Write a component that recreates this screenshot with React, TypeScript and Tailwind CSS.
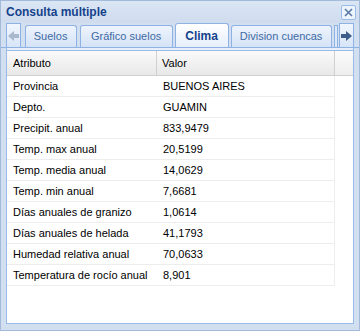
import React from 'react';

const rows: [string, string][] = [
  ['Provincia', 'BUENOS AIRES'],
  ['Depto.', 'GUAMIN'],
  ['Precipit. anual', '833,9479'],
  ['Temp. max anual', '20,5199'],
  ['Temp. media anual', '14,0629'],
  ['Temp. min anual', '7,6681'],
  ['Días anuales de granizo', '1,0614'],
  ['Días anuales de helada', '41,1793'],
  ['Humedad relativa anual', '70,0633'],
  ['Temperatura de rocío anual', '8,901'],
];

const tabs = [
  { label: 'Suelos', w: 'w-[52px]' },
  { label: 'Gráfico suelos', w: 'w-[93px]' },
  { label: 'Clima', w: 'w-[54px]', active: true },
  { label: 'Division cuencas', w: 'w-[101px]' },
];

const Arrow = ({ dir, color }: { dir: 'left' | 'right'; color: string }) => (
  <svg width="11" height="10" viewBox="0 0 11 10" className={dir === 'left' ? 'rotate-180' : ''}>
    <rect x="0" y="3" width="6" height="4" fill={color} />
    <path d="M5 0 L11 5 L5 10 Z" fill={color} />
  </svg>
);

export default function App() {
  return (
    <div
      className="w-[360px] h-[331px] flex flex-col bg-[#d2dff0] border border-[#a3bad9] text-[11px]"
      style={{ fontFamily: '"Liberation Sans", Arial, sans-serif' }}
    >
      {/* title */}
      <div className="h-[22px] flex items-center justify-between pl-[5px] pr-[3px] bg-gradient-to-b from-[#dae6f4] to-[#cfdcee]">
        <span className="font-bold text-[12px] text-[#15428b]">Consulta múltiple</span>
        <div className="w-[15px] h-[15px] border border-[#99bbe8] bg-[#eef4fc] rounded-[2px] flex items-center justify-center">
          <svg width="9" height="9" viewBox="0 0 9 9">
            <path d="M1 1 L8 8 M8 1 L1 8" stroke="#5b7aa8" strokeWidth="1.6" />
          </svg>
        </div>
      </div>

      {/* tab strip */}
      <div className="h-[25px] flex items-end pl-[5px] pr-[5px] border-b border-[#8db2e3]">
        <div className="w-[18px] h-[24px] border border-b-0 border-[#8db2e3] bg-gradient-to-b from-[#f1f6fd] to-[#d7e5f7] flex items-center justify-center">
          <Arrow dir="left" color="#a9b8cc" />
        </div>
        <div className="flex items-end ml-[3px] gap-[1px] flex-1">
          {tabs.map((t) => (
            <div
              key={t.label}
              className={`${t.w} flex items-center justify-center border border-b-0 border-[#8db2e3] rounded-t-[3px] ${
                t.active
                  ? 'h-[24px] bg-gradient-to-b from-[#ffffff] to-[#e6effb] font-bold text-[#15428b] text-[12px]'
                  : 'h-[22px] bg-gradient-to-b from-[#eef4fd] to-[#d5e3f6] text-[#416aa3] mx-[1px]'
              }`}
            >
              {t.label}
            </div>
          ))}
          <div className="w-[4px] h-[22px] border border-b-0 border-[#8db2e3] bg-[#dce8f7]" />
        </div>
        <div className="w-[19px] h-[24px] border border-b-0 border-[#8db2e3] bg-gradient-to-b from-[#f1f6fd] to-[#d7e5f7] flex items-center justify-center ml-[1px]">
          <Arrow dir="right" color="#3f5d8a" />
        </div>
      </div>

      {/* body */}
      <div className="flex-1 mx-[5px] mb-[6px] border border-t-0 border-[#99bbe8] bg-white flex flex-col text-[#000]">
        <div className="h-[3px] bg-[#e6effb] border-b border-[#99bbe8]" />
        <div className="h-[25px] flex bg-gradient-to-b from-[#fafafa] to-[#e8e8e8] border-b border-[#d0d0d0]">
          <div className="w-[150px] flex items-center pl-[6px] border-r border-[#d0d0d0]">Atributo</div>
          <div className="w-[178px] flex items-center pl-[5px] border-r border-[#d0d0d0]">Valor</div>
          <div className="flex-1 bg-gradient-to-b from-[#fbfbfb] to-[#eeeeee]" />
        </div>
        <div className="w-[328px] flex flex-col">
          {rows.map(([a, v]) => (
            <div key={a} className="h-[21px] flex items-center border-b border-r border-[#ededed]">
              <div className="w-[150px] pl-[6px]">{a}</div>
              <div className="pl-[6px]">{v}</div>
            </div>
          ))}
        </div>
      </div>
    </div>
  );
}
